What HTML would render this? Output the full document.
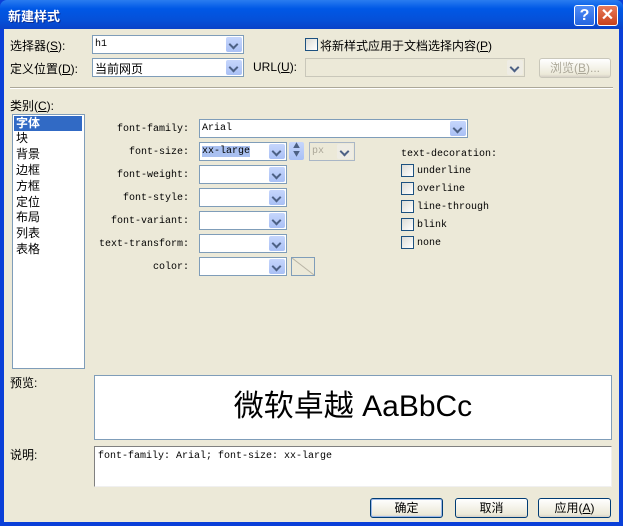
<!DOCTYPE html>
<html><head><meta charset="utf-8"><style>
*{box-sizing:border-box;margin:0;padding:0}
body{width:623px;height:526px;overflow:hidden;background:#0a3fd8;font-family:"SimSun","Noto Sans CJK SC","Liberation Mono",monospace;font-size:12px;color:#000;position:relative}
.a{position:absolute}
#title{left:0;top:0;width:623px;height:29px;background:linear-gradient(#2a7cf0,#0058e6 30%,#0550d8 70%,#0a42c8);border-radius:7px 7px 0 0}
#title span{position:absolute;left:8px;top:6px;color:#fff;font-weight:bold;font-size:13px;font-family:"Liberation Sans","Noto Sans CJK SC",sans-serif;text-shadow:1px 1px #0a2a90}
#client{left:4px;top:29px;width:615px;height:493px;background:#ECE9D8}
.tb{top:5px;width:21px;height:21px;border:1px solid #fff;border-radius:3px;color:#fff;font:bold 16px "Liberation Sans",sans-serif;text-align:center;line-height:19px}
.cb{background:#fff;border:1px solid #7f9db9;height:19px}
.dd{position:absolute;right:1px;top:1px;width:16px;height:15px;background:linear-gradient(#c6d6fc,#a9c0f5);border-radius:2px}
.dd:after{content:"";position:absolute;left:4px;top:4px;width:5px;height:5px;border-right:2px solid #4d6185;border-bottom:2px solid #4d6185;transform:rotate(45deg)}
.t{font-family:"Liberation Sans","Noto Sans CJK SC",sans-serif;font-size:12px;white-space:nowrap}
.m{font-family:"Liberation Mono","Noto Sans CJK SC",monospace;font-size:10px;white-space:nowrap}
.lab{width:100px;text-align:right;left:89px}
.chk{width:13px;height:13px;border:1px solid #1c5180;background:linear-gradient(135deg,#dcdcd6,#fff)}
.btn{height:20px;border:1px solid #003c74;border-radius:3px;background:linear-gradient(#fff,#ece9d8 85%,#d6d0c5);text-align:center;line-height:18px}
.li{left:14px;width:68px;height:15px;line-height:15px;padding-left:2px}
</style></head><body>
<div id="title" class="a"><span>新建样式</span></div>
<div class="a tb" style="left:574px;background:linear-gradient(#4f8cf6,#2465e0)">?</div>
<div class="a tb" style="left:597px;background:linear-gradient(#e87a5a,#c8411c)">✕</div>
<div id="client" class="a"></div>

<div class="a t" style="left:10px;top:37px">选择器(<u>S</u>):</div>
<div class="a cb" style="left:92px;top:35px;width:152px"><span class="m" style="position:absolute;left:2px;top:3px">h1</span><div class="dd"></div></div>
<div class="a chk" style="left:305px;top:38px"></div>
<div class="a t" style="left:320px;top:37px">将新样式应用于文档选择内容(<u>P</u>)</div>

<div class="a t" style="left:10px;top:60px">定义位置(<u>D</u>):</div>
<div class="a cb" style="left:92px;top:58px;width:152px"><span class="t" style="position:absolute;left:2px;top:1px">当前网页</span><div class="dd"></div></div>
<div class="a t" style="left:253px;top:60px">URL(<u>U</u>):</div>
<div class="a cb" style="left:305px;top:58px;width:220px;background:#ECE9D8;border-color:#c9c7ba"><div class="dd" style="background:#eeece4"></div></div>
<div class="a btn t" style="left:539px;top:58px;width:72px;color:#aca899;border-color:#c9c7ba">浏览(<u>B</u>)...</div>

<div class="a" style="left:10px;top:87px;width:603px;height:2px;border-top:1px solid #aca899;border-bottom:1px solid #fff"></div>

<div class="a t" style="left:10px;top:97px">类别(<u>C</u>):</div>
<div class="a" style="left:12px;top:114px;width:73px;height:255px;background:#fff;border:1px solid #7f9db9"></div>
<div class="a li t" style="top:116px;background:#316ac5;color:#fff;font-weight:bold">字体</div>
<div class="a li t" style="top:131px">块</div>
<div class="a li t" style="top:147px">背景</div>
<div class="a li t" style="top:163px">边框</div>
<div class="a li t" style="top:179px">方框</div>
<div class="a li t" style="top:195px">定位</div>
<div class="a li t" style="top:210px">布局</div>
<div class="a li t" style="top:226px">列表</div>
<div class="a li t" style="top:242px">表格</div>

<div class="a m lab" style="top:124px">font-family:</div>
<div class="a cb" style="left:199px;top:119px;width:269px"><span class="m" style="position:absolute;left:2px;top:3px">Arial</span><div class="dd"></div></div>
<div class="a m lab" style="top:147px">font-size:</div>
<div class="a cb" style="left:199px;top:142px;width:88px"><span class="m" style="position:absolute;left:2px;top:3px;background:#a9c0f0">xx-large</span><div class="dd"></div></div>
<div class="a" style="left:289px;top:142px;width:15px;height:18px;background:linear-gradient(#c6d6fc,#a9c0f5);border-radius:2px;font-size:7px;color:#4d6185;text-align:center;line-height:8px">▲<br>▼</div>
<div class="a cb" style="left:309px;top:142px;width:46px;border-color:#a9b6c6;background:#ECE9D8"><span class="m" style="position:absolute;left:2px;top:3px;color:#aca899">px</span><div class="dd" style="background:#eeece4"></div></div>
<div class="a m lab" style="top:170px">font-weight:</div>
<div class="a cb" style="left:199px;top:165px;width:88px"><div class="dd"></div></div>
<div class="a m lab" style="top:193px">font-style:</div>
<div class="a cb" style="left:199px;top:188px;width:88px"><div class="dd"></div></div>
<div class="a m lab" style="top:216px">font-variant:</div>
<div class="a cb" style="left:199px;top:211px;width:88px"><div class="dd"></div></div>
<div class="a m lab" style="top:239px">text-transform:</div>
<div class="a cb" style="left:199px;top:234px;width:88px"><div class="dd"></div></div>
<div class="a m lab" style="top:262px">color:</div>
<div class="a cb" style="left:199px;top:257px;width:88px"><div class="dd"></div></div>
<div class="a" style="left:291px;top:257px;width:24px;height:19px;border:1px solid #7f9db9;background:linear-gradient(to top right,transparent 47%,#aca899 50%,transparent 53%)"></div>

<div class="a m" style="left:401px;top:149px">text-decoration:</div>
<div class="a chk" style="left:401px;top:164px"></div><div class="a m" style="left:417px;top:166px">underline</div>
<div class="a chk" style="left:401px;top:182px"></div><div class="a m" style="left:417px;top:184px">overline</div>
<div class="a chk" style="left:401px;top:200px"></div><div class="a m" style="left:417px;top:202px">line-through</div>
<div class="a chk" style="left:401px;top:218px"></div><div class="a m" style="left:417px;top:220px">blink</div>
<div class="a chk" style="left:401px;top:236px"></div><div class="a m" style="left:417px;top:238px">none</div>

<div class="a t" style="left:10px;top:374px">预览:</div>
<div class="a" style="left:94px;top:375px;width:518px;height:65px;background:#fff;border:1px solid #7f9db9;text-align:center;line-height:62px;font-size:30px;font-family:'Liberation Sans','Noto Sans CJK SC',sans-serif">微软卓越 AaBbCc</div>

<div class="a t" style="left:10px;top:446px">说明:</div>
<div class="a" style="left:94px;top:446px;width:518px;height:41px;background:#fff;border:1px solid;border-color:#808080 #f0f0f0 #f0f0f0 #808080"><span class="m" style="position:absolute;left:3px;top:4px">font-family: Arial; font-size: xx-large</span></div>

<div class="a btn t" style="left:370px;top:498px;width:73px;border-color:#003c74;box-shadow:inset 0 0 0 1px #9cb8e8">确定</div>
<div class="a btn t" style="left:455px;top:498px;width:73px">取消</div>
<div class="a btn t" style="left:538px;top:498px;width:73px">应用(<u>A</u>)</div>
</body></html>
